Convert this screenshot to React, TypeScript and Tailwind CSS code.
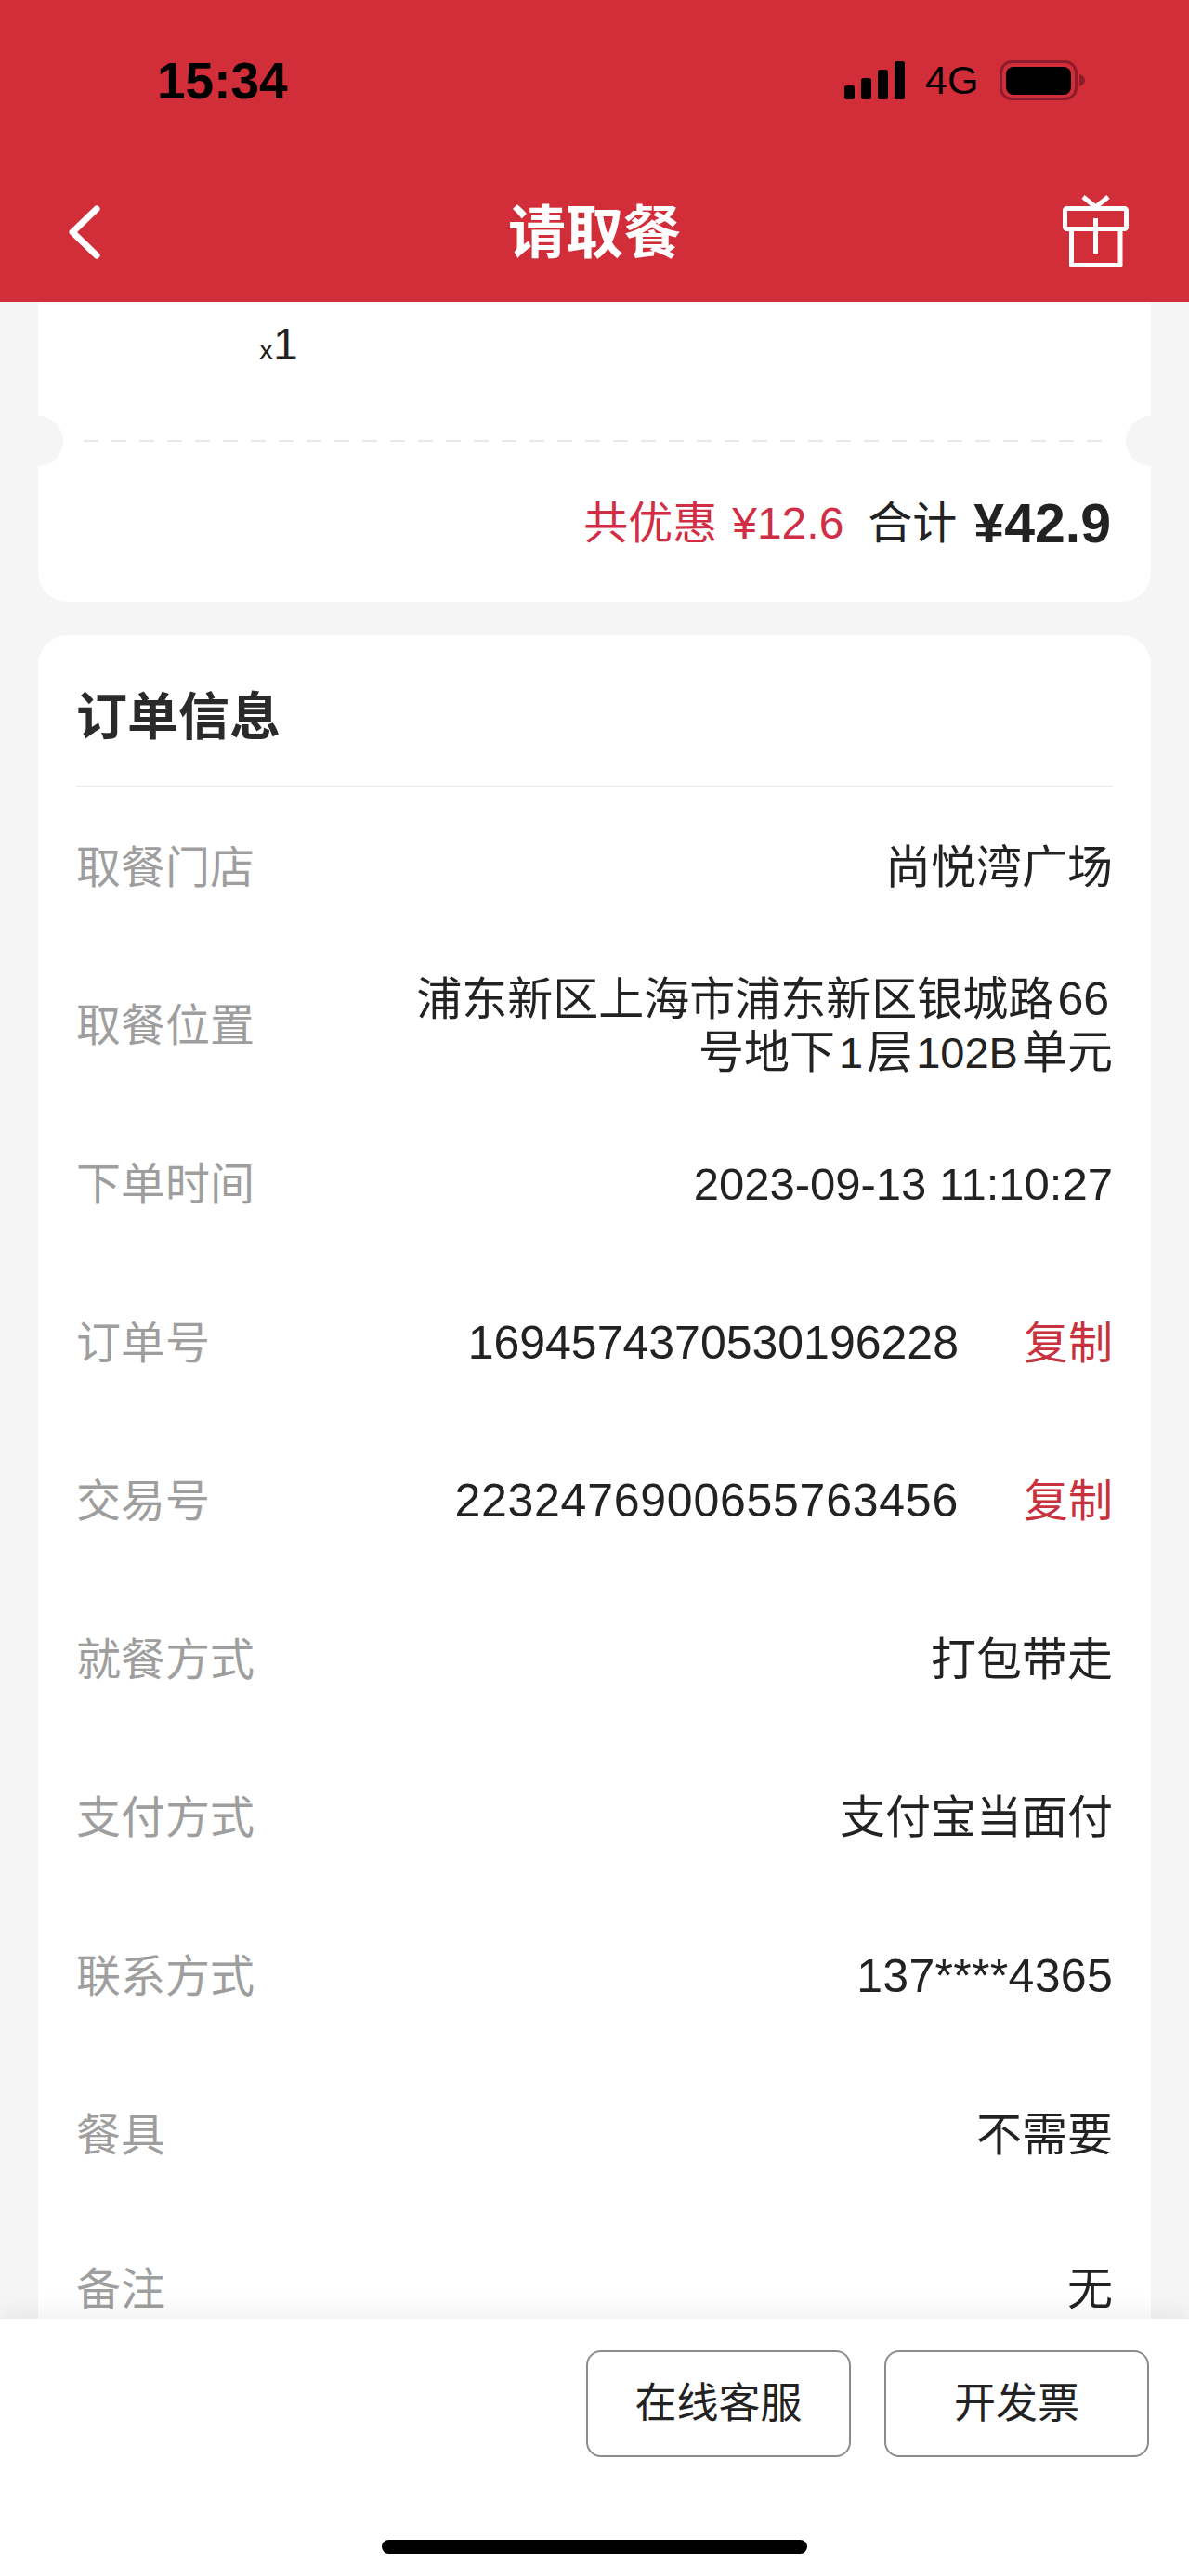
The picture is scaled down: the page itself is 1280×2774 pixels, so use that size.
const infoRows: { label: string; value: string; copy?: boolean; numClass?: string }[] = [
  { label: '取餐门店', value: '尚悦湾广场' },
  { label: '取餐位置', value: '浦东新区上海市浦东新区银城路66号地下1层102B单元' },
  { label: '下单时间', value: '2023-09-13 11:10:27', numClass: 'text-[49px]' },
  { label: '订单号', value: '1694574370530196228', copy: true, numClass: 'text-[50px]' },
  { label: '交易号', value: '2232476900655763456', copy: true, numClass: 'text-[50px] tracking-[0.75px]' },
  { label: '就餐方式', value: '打包带走' },
  { label: '支付方式', value: '支付宝当面付' },
  { label: '联系方式', value: '137****4365', numClass: 'text-[50px] tracking-[0.3px]' },
  { label: '餐具', value: '不需要' },
  { label: '备注', value: '无' },
];

// latin runs inside CJK text get a small gap either side
function MixedText({ text }: { text: string }) {
  const parts = text.split(/([0-9A-Z]+)/).filter(Boolean);
  return (
    <>
      {parts.map((part, i) =>
        /[0-9A-Z]/.test(part) ? (
          <span key={i} className={`mx-[4px] ${part.includes('1') ? 'text-[47px]' : 'text-[50px]'}`}>{part}</span>
        ) : (
          <span key={i}>{part}</span>
        )
      )}
    </>
  );
}

function SignalIcon() {
  return (
    <svg width="65" height="41" viewBox="0 0 65 41" fill="#000">
      <rect x="0" y="26" width="11" height="15" rx="2.5" />
      <rect x="18" y="18" width="11" height="23" rx="2.5" />
      <rect x="36" y="9" width="11" height="32" rx="2.5" />
      <rect x="54" y="0" width="11" height="41" rx="2.5" />
    </svg>
  );
}

function BatteryIcon() {
  return (
    <svg width="92" height="43" viewBox="0 0 92 43">
      <rect x="1.500" y="1.500" width="81" height="40" rx="12" fill="none" stroke="#8f1c2b" strokeWidth="3" />
      <rect x="7" y="7" width="70" height="30" rx="8" fill="#000" />
      <path d="M86 15c3.500 1 6 3.500 6 6.500s-2.500 5.500-6 6.500z" fill="#8f1c2b" />
    </svg>
  );
}

function GiftIcon() {
  return (
    <svg width="72" height="78" viewBox="0 0 72 78" fill="none" stroke="#fff" strokeWidth="5" strokeLinejoin="round">
      <rect x="2.500" y="14.500" width="66" height="22" rx="2" />
      <path d="M9.500 37v38.500h52.500V37" />
      <path d="M35.500 25v38" />
      <path d="M22 2l13.500 11L49 2" />
    </svg>
  );
}

export default function App() {
  return (
    <div className="flex flex-col h-[2774px] overflow-hidden bg-[#f5f5f5] font-['Liberation_Sans','Noto_Sans_CJK_SC',sans-serif]">
      {/* Header */}
      <div className="h-[325px] shrink-0 bg-[#d12e3a] flex flex-col">
        <div className="relative h-[190px]">
          <span className="absolute left-[169px] top-[55px] text-[55px] leading-[64px] font-bold text-black">15:34</span>
          <div className="absolute left-[909px] top-[64px] flex items-center">
            <SignalIcon />
            <span className="ml-[22px] text-[43px] leading-[44px] text-black">4G</span>
            <div className="ml-[23px]">
              <BatteryIcon />
            </div>
          </div>
        </div>
        <div className="relative flex-1 flex items-center justify-center pb-[12px]">
          <svg className="absolute left-[72px] top-[31px]" width="38" height="58" viewBox="0 0 38 58" fill="none" stroke="#fff" strokeWidth="7" strokeLinecap="round" strokeLinejoin="round">
            <path d="M32 4L6 29l26 25" />
          </svg>
          <span className="text-[62px] leading-[70px] font-semibold text-white">请取餐</span>
          <div className="absolute left-[1144px] top-[20px]">
            <GiftIcon />
          </div>
        </div>
      </div>

      {/* Scrolling content */}
      <div className="flex-1 min-h-0 overflow-hidden px-[41px]">
        {/* Goods card, scrolled under the header */}
        <div className="relative h-[323px] bg-white rounded-b-[32px]">
          <div className="pl-[238px] pt-[21px] flex items-baseline text-[#222]">
            <span className="text-[30px] leading-[50px]">x</span>
            <span className="text-[48px] leading-[50px]">1</span>
          </div>
          <div className="absolute left-[-27px] top-[123px] w-[54px] h-[54px] rounded-full bg-[#f5f5f5]" />
          <div className="absolute right-[-27px] top-[123px] w-[54px] h-[54px] rounded-full bg-[#f5f5f5]" />
          <div className="absolute left-[49px] right-[49px] top-[149px] h-[2px] bg-[repeating-linear-gradient(90deg,#e8e8e8_0,#e8e8e8_16px,transparent_16px,transparent_30px)]" />
          <div className="absolute right-[43px] top-[207px] flex items-center leading-[64px] text-[#222]">
            <span className="text-[48px] text-[#d12e45]">共优惠</span>
            <span className="ml-[16px] text-[48px] text-[#d12e45]">¥12.6</span>
            <span className="ml-[26px] text-[48px]">合计</span>
            <span className="ml-[18px] text-[59px] font-bold">¥42.9</span>
          </div>
        </div>

        {/* Order info card */}
        <div className="mt-[36px] bg-white rounded-[32px] px-[41px]">
          <div className="h-[164px] flex items-center border-b-2 border-[#e8e8e8]">
            <h2 className="text-[55px] leading-[70px] font-semibold text-[#2a2a2a] pt-[14px]">订单信息</h2>
          </div>
          <div className="pt-[1px]">
            {infoRows.map((row, i) => (
              <div
                key={row.label}
                className={`flex items-center justify-between ${i === infoRows.length - 1 ? 'h-[162px]' : 'h-[170.600px]'}`}
              >
                <span className="text-[48px] leading-[57px] text-[#9e9e9e] shrink-0">{row.label}</span>
                <div className="flex items-center justify-end text-[49px] leading-[57px] text-[#222] text-right">
                  {row.numClass ? (
                    <span className={row.numClass}>{row.value}</span>
                  ) : (
                    <span className={row.value.length > 20 ? 'w-[760px]' : ''}>
                      <MixedText text={row.value} />
                    </span>
                  )}
                  {row.copy && <span className="ml-[70px] text-[48px] text-[#c8323e]">复制</span>}
                </div>
              </div>
            ))}
          </div>
        </div>
      </div>

      {/* Bottom bar */}
      <div className="relative h-[277px] shrink-0 bg-white shadow-[0_-8px_24px_rgba(0,0,0,0.06)]">
        <div className="flex justify-end gap-[36px] pt-[34px] pr-[43px]">
          <button className="w-[285px] h-[115px] rounded-[16px] border-2 border-[#8c8c8c] text-[45px] text-[#222]">在线客服</button>
          <button className="w-[285px] h-[115px] rounded-[16px] border-2 border-[#8c8c8c] text-[45px] text-[#222]">开发票</button>
        </div>
        <div className="absolute left-[411px] top-[238px] w-[458px] h-[15px] rounded-full bg-black" />
      </div>
    </div>
  );
}
